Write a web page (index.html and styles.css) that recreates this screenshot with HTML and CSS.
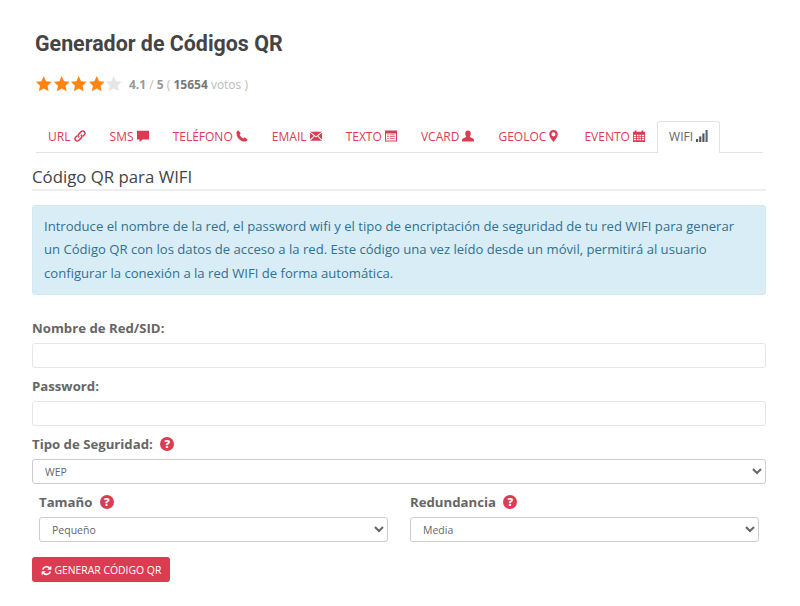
FILE: index.html
```html
<!DOCTYPE html>
<html>
<head>
    <title>Generador de Códigos QR</title>
    <meta name="viewport" content="width=device-width, initial-scale=1">
    <link rel="stylesheet" href="styles.css">
</head>
<body>
    <div class="page">
        <div class="top">
            <h1>Generador de Códigos QR</h1>
            <div class="rating">
                <div class="stars">
                    <svg viewBox="0 0 24 24"><path class="on" d="M12 1.500l3.200 7 7.600.9-5.600 5.200 1.500 7.600-6.700-3.800-6.700 3.800 1.500-7.600L1.200 9.400l7.600-.9z"/></svg>
                    <svg viewBox="0 0 24 24"><path class="on" d="M12 1.500l3.200 7 7.600.9-5.600 5.200 1.500 7.600-6.700-3.800-6.700 3.800 1.500-7.600L1.200 9.400l7.600-.9z"/></svg>
                    <svg viewBox="0 0 24 24"><path class="on" d="M12 1.500l3.200 7 7.600.9-5.600 5.200 1.500 7.600-6.700-3.800-6.700 3.800 1.500-7.600L1.200 9.400l7.600-.9z"/></svg>
                    <svg viewBox="0 0 24 24"><path class="on" d="M12 1.500l3.200 7 7.600.9-5.600 5.200 1.500 7.600-6.700-3.800-6.700 3.800 1.500-7.600L1.200 9.400l7.600-.9z"/></svg>
                    <svg viewBox="0 0 24 24"><path class="off" d="M12 1.500l3.200 7 7.600.9-5.600 5.200 1.500 7.600-6.700-3.800-6.700 3.800 1.500-7.600L1.200 9.400l7.600-.9z"/></svg>
                </div>
                <span class="score"><b>4.1</b> / <b>5</b> ( <b class="votes">15654</b> votos )</span>
            </div>
            <ul class="tabs">
                <li><a>URL <svg class="ico" viewBox="1 1 14 14"><path fill="none" stroke="currentColor" stroke-width="1.800" d="M7 9.500l-.5-.5a2.300 2.300 0 0 1 0-3.200l3-3a2.300 2.300 0 0 1 3.300 0l.4.4a2.300 2.300 0 0 1 0 3.300L11.500 8.200M9 6.500l.5.5a2.300 2.300 0 0 1 0 3.200l-3 3a2.300 2.300 0 0 1-3.300 0l-.4-.4a2.300 2.300 0 0 1 0-3.300L4.500 7.800"/></svg></a></li>
                <li><a>SMS <svg class="ico" viewBox="1 1 14 14"><path d="M1 2h14v10H7.500L4 15v-3H1z"/></svg></a></li>
                <li><a>TELÉFONO <svg class="ico" viewBox="1 1 14 14"><path d="M4 1.500l2.500 3.300-1.300 1.700c.8 1.800 2.400 3.400 4.300 4.300l1.700-1.300 3.300 2.500c-.3 1.500-1.500 2.500-3 2.500C6 14.500 1.500 10 1.500 4.500c0-1.500 1-2.700 2.500-3z"/></svg></a></li>
                <li><a>EMAIL <svg class="ico" viewBox="1 1 14 14"><path d="M1 3h14v10.500H1z"/><path fill="none" stroke="#fff" stroke-width="1.200" d="M1 3.500l7 5.500 7-5.500M1 13l5-5M15 13l-5-5"/></svg></a></li>
                <li><a>TEXTO <svg class="ico" viewBox="1 1 14 14"><path fill-rule="evenodd" d="M1 1.500h14v13H1zM2.200 5v8.300h11.600V5zM3.500 6.200h2v.9h-2zM6.700 6.200h5.800v.9H6.700zM3.500 8.400h2v.9h-2zM6.700 8.400h5.800v.9H6.700zM3.500 10.600h2v.9h-2zM6.700 10.600h5.800v.9H6.700z"/></svg></a></li>
                <li><a>VCARD <svg class="ico" viewBox="1 1 14 14"><path d="M8 1.500c2 0 3.200 1.500 3.200 3.500S10.300 8 10 8.800c0 .8 5 1.500 5 3.700v2H1v-2c0-2.200 5-2.900 5-3.700C5.700 8 4.800 7 4.800 5S6 1.500 8 1.500z"/></svg></a></li>
                <li><a>GEOLOC <svg class="ico ico-pin" viewBox="3 1 10 14"><path fill-rule="evenodd" d="M8 1c3 0 5 2.200 5 5 0 3-3 6.500-5 9-2-2.500-5-6-5-9 0-2.800 2-5 5-5zm0 2.700a2.400 2.400 0 1 0 0 4.800 2.400 2.400 0 0 0 0-4.800z"/></svg></a></li>
                <li><a>EVENTO <svg class="ico" viewBox="1 1 14 14"><path fill-rule="evenodd" d="M1 3h2V1.500h2V3h6V1.500h2V3h2v12H1zM2 6.500V8h2.500V6.500zM5.500 6.500V8h2V6.500zM8.500 6.500V8h2V6.500zM11.500 6.500V8H14V6.500zM2 9v1.500h2.500V9zM5.500 9v1.500h2V9zM8.500 9v1.500h2V9zM11.500 9v1.500H14V9zM2 11.500V13h2.500v-1.500zM5.500 11.500V13h2v-1.500zM8.500 11.500V13h2v-1.500zM11.500 11.500V13H14v-1.500z"/></svg></a></li>
                <li class="active"><a>WIFI <svg class="ico" viewBox="1 1 14 14"><path d="M1 11.500h2.500V15H1z" fill="#555"/><path d="M4.700 8.500h2.500V15H4.700z" fill="#555"/><path d="M8.400 5h2.500v10H8.400z" fill="#555"/><path d="M12.100 1h2.500v14h-2.500z" fill="#4a6a8a"/></svg></a></li>
            </ul>
        </div>

        <h2>Código QR para WIFI</h2>

        <div class="alert">
            Introduce el nombre de la red, el password wifi y el tipo de encriptación de seguridad de tu red WIFI para generar un Código QR con los datos de acceso a la red. Este código una vez leído desde un móvil, permitirá al usuario configurar la conexión a la red WIFI de forma automática.
        </div>

        <form class="qr-form">
            <div class="form-group">
                <label for="ssid">Nombre de Red/SID:</label>
                <input id="ssid" type="text">
            </div>
            <div class="form-group">
                <label for="password">Password:</label>
                <input id="password" type="text">
            </div>
            <div class="form-group">
                <label for="security">Tipo de Seguridad: <span class="help">?</span></label>
                <select id="security" class="field-select"><option>WEP</option></select>
            </div>
            <div class="form-row">
                <div class="form-col">
                    <label for="size">Tamaño <span class="help">?</span></label>
                    <select id="size" class="field-select"><option>Pequeño</option></select>
                </div>
                <div class="form-col">
                    <label for="redundancy">Redundancia <span class="help">?</span></label>
                    <select id="redundancy" class="field-select"><option>Media</option></select>
                </div>
            </div>
            <button type="button" class="btn-generate"><svg viewBox="0 0 16 16"><path fill="none" stroke="#fff" stroke-width="2.400" d="M2.500 6.500A5.800 5.800 0 0 1 12.300 4.200M13.500 9.500A5.800 5.800 0 0 1 3.700 11.800"/><path fill="#fff" d="M15 1v6H9zM1 15V9h6z"/></svg> GENERAR CÓDIGO QR</button>
        </form>
    </div>
</body>
</html>
```

FILE: styles.css
```css
* {
    box-sizing: border-box;
}
body {
    margin: 0;
    font-family: "Open Sans", sans-serif;
    color: #555;
    background-color: #fff;
}
.page {
    padding: 0 34px 0 32px;
}
.top {
    padding: 0 3px 0 4px;
}
h1 {
    margin: 0 0 0 -1px;
    padding-top: 32px;
    font-family: Roboto, sans-serif;
    font-size: 21.400px;
    line-height: 24px;
    font-weight: bold;
    color: #444;
}
.rating {
    display: flex;
    align-items: center;
    margin: 16px 0 0 -1px;
    height: 24px;
}
.stars {
    display: flex;
    width: 87px;
}
.stars svg {
    width: 17.500px;
    height: 17.500px;
    flex: none;
}
.on {
    fill: #ff8412;
}
.off {
    fill: #e6e6e6;
}
.score {
    margin-left: 7px;
    font-size: 12px;
    color: #bbb;
}
.score b {
    color: #999;
}
.score .votes {
    color: #777;
}
.tabs {
    display: flex;
    list-style: none;
    margin: 25px 0 0 0;
    padding: 0;
    height: 32px;
    border-bottom: 1px solid #e3e3e3;
}
.tabs li {
    height: 32px;
}
.tabs a {
    display: block;
    padding: 0 11px;
    font-size: 12px;
    line-height: 30px;
    color: #dc3c52;
    border: 1px solid transparent;
    border-bottom: none;
    white-space: nowrap;
}
.tabs .active a {
    color: #666;
    background-color: #fff;
    border-color: #e3e3e3;
    border-radius: 3px 3px 0 0;
    height: 32px;
}
.ico {
    width: 12px;
    height: 12px;
    fill: currentColor;
    vertical-align: -1px;
}
.ico-pin {
    width: 9px;
    margin-right: 2px;
}
h2 {
    margin: 14px 0 0 0;
    padding-bottom: 2px;
    font-size: 16.800px;
    line-height: 20px;
    font-weight: normal;
    color: #444;
    border-bottom: 2px solid #eee;
}
.alert {
    margin-top: 14px;
    padding: 9px 20px 9px 11px;
    font-size: 13.100px;
    line-height: 23.400px;
    color: #31708f;
    background-color: #d9edf7;
    border: 1px solid #cfe8f3;
    border-radius: 3px;
}
.qr-form {
    margin-top: 23px;
}
.form-group {
    margin-bottom: 8px;
}
label {
    display: block;
    margin-bottom: 5px;
    font-size: 13.200px;
    line-height: 20px;
    font-weight: bold;
    color: #666;
}
input,
select {
    display: block;
    width: 100%;
    height: 25px;
    font-family: "Open Sans", sans-serif;
    font-size: 10.500px;
    color: #666;
    background-color: #fff;
    border: 1px solid #e6e6e6;
    border-radius: 3px;
    padding: 0 8px;
}
.field-select {
    border-color: #ccc;
}
.form-row {
    display: flex;
    gap: 22px;
    padding: 0 7px;
    margin-bottom: 15px;
}
.form-col {
    flex: 1;
}
.help {
    display: inline-block;
    width: 14px;
    height: 14px;
    margin-left: 4px;
    border-radius: 50%;
    background-color: #dc3c52;
    color: #fff;
    font-size: 11px;
    font-weight: 800;
    line-height: 14px;
    text-align: center;
    vertical-align: 1px;
}
.btn-generate {
    display: block;
    width: 138px;
    height: 25px;
    padding: 0;
    font-family: "Open Sans", sans-serif;
    font-size: 10.400px;
    color: #fff;
    background-color: #dc3c52;
    border: none;
    border-radius: 3px;
    cursor: pointer;
}
.btn-generate svg {
    width: 11px;
    height: 11px;
    vertical-align: -2px;
}
```
